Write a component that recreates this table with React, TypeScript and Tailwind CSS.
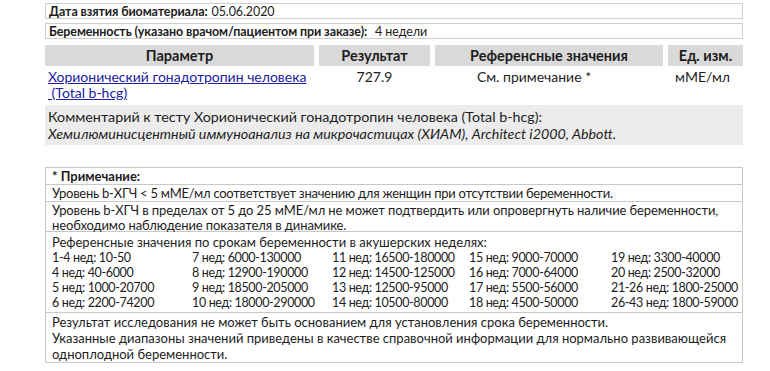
import React from 'react';

const weeks = [
  ['1-4 нед: 10-50', '7 нед: 6000-130000', '11 нед: 16500-180000', '15 нед: 9000-70000', '19 нед: 3300-40000'],
  ['4 нед: 40-6000', '8 нед: 12900-190000', '12 нед: 14500-125000', '16 нед: 7000-64000', '20 нед: 2500-32000'],
  ['5 нед: 1000-20700', '9 нед: 18500-205000', '13 нед: 12500-95000', '17 нед: 5500-56000', '21-26 нед: 1800-25000'],
  ['6 нед: 2200-74200', '10 нед: 18000-290000', '14 нед: 10500-80000', '18 нед: 4500-50000', '26-43 нед: 1800-59000'],
];

const App = () => {
  return (
    <div
      className="w-[770px] h-[371px] bg-white text-[#1c1c1c] text-[13px] leading-[15px]"
      style={{ fontFamily: 'Lato, "Open Sans", sans-serif' }}
    >
      <div className="ml-[45px] w-[698px] pt-[3px] flex flex-col">
        {/* Info boxes */}
        <div className="border border-[#cfcfcf] h-[16px] px-[3px] flex items-center text-[12.5px] tracking-[-0.1px]">
          <span className="font-bold">Дата взятия биоматериала:</span>
          <span className="ml-1">05.06.2020</span>
        </div>
        <div className="border border-[#cfcfcf] h-[16px] px-[3px] mt-[4px] flex items-center text-[12.5px] tracking-[-0.1px]">
          <span className="font-bold">Беременность (указано врачом/пациентом при заказе):</span>
          <span className="ml-2">4 недели</span>
        </div>

        {/* Header */}
        <div className="flex gap-[5px] mt-[6px] h-[21px] font-bold text-[14.5px]">
          <div className="w-[269px] bg-[#d9d9d9] flex items-center justify-center">Параметр</div>
          <div className="w-[111px] bg-[#d9d9d9] flex items-center justify-center">Результат</div>
          <div className="w-[228px] bg-[#d9d9d9] flex items-center justify-center">Референсные значения</div>
          <div className="w-[75px] bg-[#d9d9d9] flex items-center justify-center">Ед. изм.</div>
        </div>

        {/* Data row */}
        <div className="flex gap-[5px] pt-[3px] h-[39px] text-[14px] leading-[16px]">
          <div className="w-[269px] pl-[3px] text-[#2020a0] underline">
            Хорионический гонадотропин человека
            <br />
            &nbsp;(Total b-hcg)
          </div>
          <div className="w-[111px] text-center">727.9</div>
          <div className="w-[228px] text-center pr-[30px]">См. примечание *</div>
          <div className="w-[75px] text-center pr-[6px]">мМЕ/мл</div>
        </div>

        {/* Comment */}
        <div className="bg-[#ececec] h-[40px] px-[3px] pt-[3px] text-[14.3px] leading-[17px]">
          <div>Комментарий к тесту Хорионический гонадотропин человека (Total b-hcg):</div>
          <div className="italic">Хемилюминисцентный иммуноанализ на микрочастицах (ХИАМ), Architect i2000, Abbott.</div>
        </div>

        {/* Note table */}
        <div className="mt-[22px] border border-[#c8c8c8] flex flex-col">
          <div className="h-[17px] px-[6px] flex items-center font-bold border-b border-[#c8c8c8]">* Примечание:</div>
          <div className="h-[17px] px-[6px] flex items-center border-b border-[#c8c8c8] tracking-[-0.25px]">
            Уровень b-ХГЧ &lt; 5 мМЕ/мл соответствует значению для женщин при отсутствии беременности.
          </div>
          <div className="h-[30px] px-[6px] pt-[1px] border-b border-[#c8c8c8] tracking-[-0.1px]">
            Уровень b-ХГЧ в пределах от 5 до 25 мМЕ/мл не может подтвердить или опровергнуть наличие беременности,
            <br />
            необходимо наблюдение показателя в динамике.
          </div>
          <div className="h-[81px] px-[6px] pt-[3px] border-b border-[#c8c8c8]">
            <div>Референсные значения по срокам беременности в акушерских неделях:</div>
            <div className="grid grid-cols-[140px_140px_137px_142px_1fr] text-[12.5px] tracking-[-0.35px] whitespace-nowrap">
              {weeks.map((row, i) =>
                row.map((cell, j) => <div key={`${i}-${j}`}>{cell}</div>)
              )}
            </div>
          </div>
          <div className="h-[49px] px-[6px] pt-[1px] leading-[16px]">
            Результат исследования не может быть основанием для установления срока беременности.
            <br />
            Указанные диапазоны значений приведены в качестве справочной информации для нормально развивающейся
            <br />
            одноплодной беременности.
          </div>
        </div>
      </div>
    </div>
  );
};

export default App;
